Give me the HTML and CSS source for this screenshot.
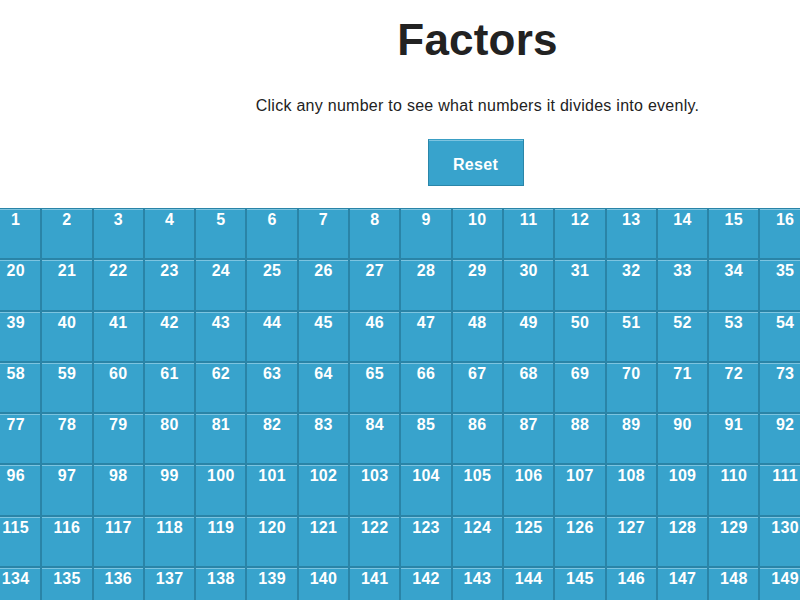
FILE: index.html
```html
<!DOCTYPE html>
<html>
<head>
<meta charset="utf-8">
<title>Factors</title>
<link rel="stylesheet" href="styles.css">
</head>
<body>
<div class="page">
  <h1 class="title">Factors</h1>
  <p class="intro">Click any number to see what numbers it divides into evenly.</p>
  <div class="actions"><button class="reset">Reset</button></div>
  <div class="grid">
    <div class="cell">1</div><div class="cell">2</div><div class="cell">3</div><div class="cell">4</div><div class="cell">5</div><div class="cell">6</div><div class="cell">7</div><div class="cell">8</div><div class="cell">9</div><div class="cell">10</div><div class="cell">11</div><div class="cell">12</div><div class="cell">13</div><div class="cell">14</div><div class="cell">15</div><div class="cell">16</div><div class="cell">17</div><div class="cell">18</div><div class="cell">19</div>
    <div class="cell">20</div><div class="cell">21</div><div class="cell">22</div><div class="cell">23</div><div class="cell">24</div><div class="cell">25</div><div class="cell">26</div><div class="cell">27</div><div class="cell">28</div><div class="cell">29</div><div class="cell">30</div><div class="cell">31</div><div class="cell">32</div><div class="cell">33</div><div class="cell">34</div><div class="cell">35</div><div class="cell">36</div><div class="cell">37</div><div class="cell">38</div>
    <div class="cell">39</div><div class="cell">40</div><div class="cell">41</div><div class="cell">42</div><div class="cell">43</div><div class="cell">44</div><div class="cell">45</div><div class="cell">46</div><div class="cell">47</div><div class="cell">48</div><div class="cell">49</div><div class="cell">50</div><div class="cell">51</div><div class="cell">52</div><div class="cell">53</div><div class="cell">54</div><div class="cell">55</div><div class="cell">56</div><div class="cell">57</div>
    <div class="cell">58</div><div class="cell">59</div><div class="cell">60</div><div class="cell">61</div><div class="cell">62</div><div class="cell">63</div><div class="cell">64</div><div class="cell">65</div><div class="cell">66</div><div class="cell">67</div><div class="cell">68</div><div class="cell">69</div><div class="cell">70</div><div class="cell">71</div><div class="cell">72</div><div class="cell">73</div><div class="cell">74</div><div class="cell">75</div><div class="cell">76</div>
    <div class="cell">77</div><div class="cell">78</div><div class="cell">79</div><div class="cell">80</div><div class="cell">81</div><div class="cell">82</div><div class="cell">83</div><div class="cell">84</div><div class="cell">85</div><div class="cell">86</div><div class="cell">87</div><div class="cell">88</div><div class="cell">89</div><div class="cell">90</div><div class="cell">91</div><div class="cell">92</div><div class="cell">93</div><div class="cell">94</div><div class="cell">95</div>
    <div class="cell">96</div><div class="cell">97</div><div class="cell">98</div><div class="cell">99</div><div class="cell">100</div><div class="cell">101</div><div class="cell">102</div><div class="cell">103</div><div class="cell">104</div><div class="cell">105</div><div class="cell">106</div><div class="cell">107</div><div class="cell">108</div><div class="cell">109</div><div class="cell">110</div><div class="cell">111</div><div class="cell">112</div><div class="cell">113</div><div class="cell">114</div>
    <div class="cell">115</div><div class="cell">116</div><div class="cell">117</div><div class="cell">118</div><div class="cell">119</div><div class="cell">120</div><div class="cell">121</div><div class="cell">122</div><div class="cell">123</div><div class="cell">124</div><div class="cell">125</div><div class="cell">126</div><div class="cell">127</div><div class="cell">128</div><div class="cell">129</div><div class="cell">130</div><div class="cell">131</div><div class="cell">132</div><div class="cell">133</div>
    <div class="cell">134</div><div class="cell">135</div><div class="cell">136</div><div class="cell">137</div><div class="cell">138</div><div class="cell">139</div><div class="cell">140</div><div class="cell">141</div><div class="cell">142</div><div class="cell">143</div><div class="cell">144</div><div class="cell">145</div><div class="cell">146</div><div class="cell">147</div><div class="cell">148</div><div class="cell">149</div><div class="cell">150</div><div class="cell">151</div><div class="cell">152</div>
  </div>
</div>
</body>
</html>
```
FILE: styles.css
```css
html, body {
  margin: 0;
  padding: 0;
  overflow: hidden;
  background: #fff;
}
body {
  font-family: "Liberation Sans", Arial, Helvetica, sans-serif;
  color: #222;
}
.page {
  width: 975px;
  margin-left: -10px;
  padding-top: 15px;
}
.title {
  margin: 0;
  font-size: 44px;
  line-height: 50px;
  font-weight: bold;
  text-align: center;
  color: #222;
  letter-spacing: 0.2px;
}
.intro {
  margin: 31px 0 0;
  font-size: 16px;
  line-height: 20px;
  text-align: center;
  letter-spacing: 0.27px;
}
.actions {
  margin-top: 23px;
  display: flex;
  justify-content: center;
  padding-right: 4px;
}
.reset {
  width: 96px;
  height: 47px;
  box-sizing: border-box;
  margin: 0;
  padding: 5px 0 0;
  border: 1px solid #2a86a9;
  border-top-color: #3a9ec4;
  background: #38a3cc;
  box-shadow: inset 0 1px 0 #7cc4e0;
  color: #fff;
  font-family: "Liberation Sans", Arial, sans-serif;
  font-size: 16px;
  font-weight: bold;
  line-height: 40px;
  letter-spacing: 0.3px;
}
.grid {
  margin-top: 22px;
  display: grid;
  grid-template-columns: repeat(19, 51.3px);
  grid-auto-rows: 51.3px;
}
.cell {
  box-sizing: border-box;
  border: 1px solid #2a84a7;
  background: #38a3cc;
  box-shadow: inset 0 1px 0 #7cc4e0;
  color: #fff;
  font-size: 16px;
  font-weight: bold;
  line-height: 20px;
  padding-top: 1px;
  text-align: center;
  letter-spacing: 0.3px;
}
```
